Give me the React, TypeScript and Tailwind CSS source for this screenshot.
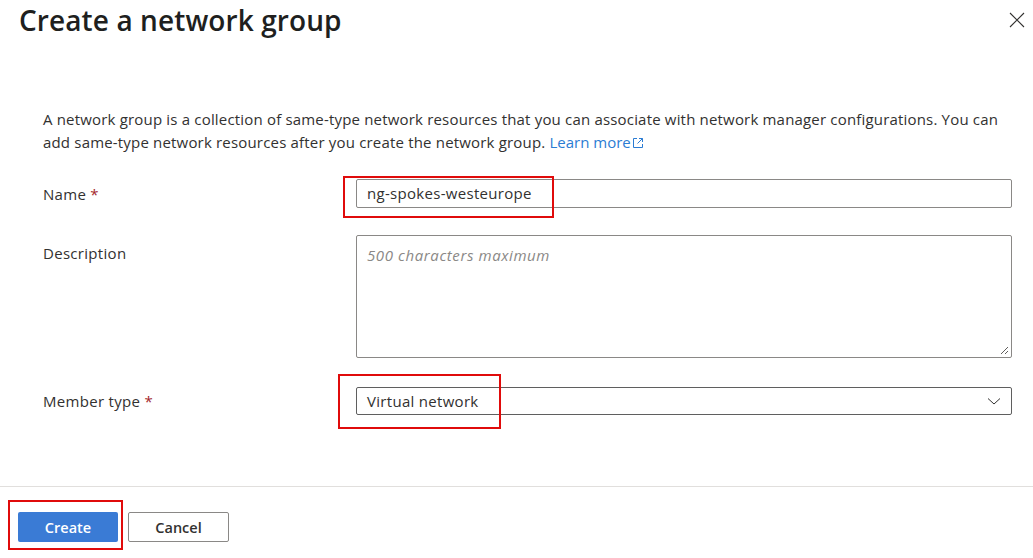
import React from "react";

function RedBox({ className }: { className: string }) {
  return <div className={`pointer-events-none absolute border-2 border-[#e00b0b] ${className}`} />;
}

export default function App() {
  return (
    <div className="relative h-[558px] w-[1033px] overflow-hidden bg-white text-[#323130] font-['Open_Sans',sans-serif]">
      {/* Header */}
      <div className="flex h-[40px] items-center justify-between pl-[19px] pr-[4px]">
        <h1 className="text-[28px] font-semibold leading-[40px] tracking-[0.1px] text-[#201f1e]">
          Create a network group
        </h1>
        <button className="flex h-[24px] w-[24px] items-center justify-center text-[#323130]">
          <svg width="16" height="16" viewBox="0 0 16 16" fill="none" stroke="currentColor" strokeWidth="1.1">
            <path d="M1 1 L15 15 M15 1 L1 15" />
          </svg>
        </button>
      </div>

      {/* Body */}
      <div className="pl-[43px] pr-[21px]">
        <p className="mt-[68px] whitespace-nowrap text-[15px] leading-[23px] tracking-[0.18px] text-[#323130]">
          A network group is a collection of same-type network resources that you can associate with network manager
          configurations. You can
          <br />
          add same-type network resources after you create the network group.{" "}
          <a className="tracking-[0px] text-[#2b7cd3]">
            Learn more
            <svg className="ml-[1px] inline-block align-[-1px]" width="12" height="12" viewBox="0 0 12 12" fill="none" stroke="currentColor" strokeWidth="1">
              <path d="M5 1.5 H1.5 V10.5 H10.5 V7" />
              <path d="M7 1.5 H10.5 V5 M10.5 1.5 L5.5 6.5" />
            </svg>
          </a>
        </p>

        {/* Name */}
        <div className="mt-[25px] flex items-center">
          <div className="w-[313px] text-[15px] leading-[28px] tracking-[0.3px] text-[#323130]">
            Name <span className="text-[#a4262c]">*</span>
          </div>
          <div className="relative flex-1">
            <div className="flex h-[29px] items-center rounded-[2px] border border-[#8a8886] pl-[10px] text-[15px] tracking-[0.3px] text-[#323130]">
              ng-spokes-westeurope
            </div>
            <RedBox className="left-[-13px] top-[-3px] h-[42px] w-[211px]" />
          </div>
        </div>

        {/* Description */}
        <div className="mt-[27px] flex items-start">
          <div className="w-[313px] pt-[7px] text-[15px] leading-[22px] tracking-[0.3px] text-[#323130]">Description</div>
          <div className="relative h-[123px] flex-1 rounded-[2px] border border-[#8a8886]">
            <div className="pl-[10px] pt-[8px] text-[15px] italic leading-[22px] tracking-[0.6px] text-[#8a8886]">500 characters maximum</div>
            <svg className="absolute bottom-[2px] right-[2px]" width="9" height="9" viewBox="0 0 9 9" stroke="#605e5c" strokeWidth="1">
              <path d="M8 1 L1 8 M8 5 L5 8" />
            </svg>
          </div>
        </div>

        {/* Member type */}
        <div className="mt-[29px] flex items-center">
          <div className="w-[313px] text-[15px] leading-[28px] tracking-[0.3px] text-[#323130]">
            Member type <span className="text-[#a4262c]">*</span>
          </div>
          <div className="relative flex-1">
            <div className="flex h-[28px] items-center justify-between rounded-[2px] border-[1.5px] border-[#5f5f5f] pl-[10px] pr-[10px] text-[15px] tracking-[0.3px] text-[#323130]">
              <span>Virtual network</span>
              <svg width="14" height="14" viewBox="0 0 14 14" fill="none" stroke="#323130" strokeWidth="1">
                <path d="M1 4.5 L7 10 L13 4.5" />
              </svg>
            </div>
            <RedBox className="left-[-18px] top-[-13px] h-[55px] w-[163px]" />
          </div>
        </div>
      </div>

      {/* Footer */}
      <div className="mt-[71px] border-t border-[#e1dfdd] pl-[18px] pt-[25px]">
        <div className="flex gap-[10px]">
          <div className="relative">
            <button className="flex h-[30px] w-[100px] items-center justify-center rounded-[2px] bg-[#3a7bd5] pt-[1px] text-[14.5px] font-semibold text-white">
              Create
            </button>
            <RedBox className="left-[-10px] top-[-12px] h-[50px] w-[115px]" />
          </div>
          <button className="flex h-[30px] w-[101px] items-center justify-center rounded-[2px] border border-[#8a8886] bg-white pt-[1px] text-[14.5px] font-semibold text-[#323130]">
            Cancel
          </button>
        </div>
      </div>
    </div>
  );
}
